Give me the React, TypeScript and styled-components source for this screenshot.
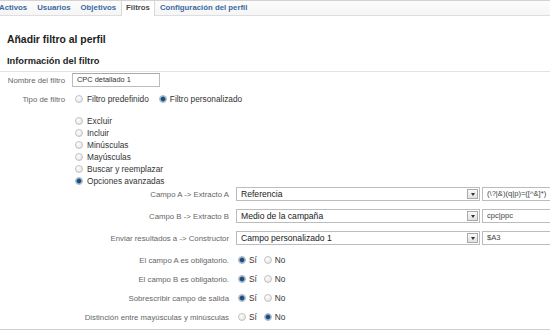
import React from 'react';
import styled, { createGlobalStyle } from 'styled-components';

const GlobalStyle = createGlobalStyle`
  html, body {
    margin: 0;
    padding: 0;
    background: #fff;
    overflow: hidden;
  }
  body {
    font-family: "Liberation Sans", Arial, sans-serif;
  }
`;

const Root = styled.div`
  width: 550px;
  height: 330px;
  overflow: hidden;
  display: flex;
  flex-direction: column;
`;

const TabBar = styled.div`
  display: flex;
  height: 14px;
  margin-left: -6px;
  border-top: 1px solid #d2d2d2;
  border-bottom: 1px solid #dedede;
  background: linear-gradient(#fcfcfc, #f5f5f5);
`;

const Tab = styled.div<{ $active?: boolean }>`
  padding: 0 ${(p) => (p.$active ? 4 : 5)}px;
  height: ${(p) => (p.$active ? 15 : 14)}px;
  line-height: 14px;
  font-size: 7.8px;
  font-weight: bold;
  white-space: nowrap;
  color: ${(p) => (p.$active ? '#4a4a4a' : '#3b6aa0')};
  background: ${(p) => (p.$active ? '#fff' : 'transparent')};
  border-left: ${(p) => (p.$active ? '1px solid #d8d8d8' : 'none')};
  border-right: ${(p) => (p.$active ? '1px solid #d8d8d8' : 'none')};
`;

const Title = styled.h1`
  margin: 18px 0 0 7px;
  font-size: 10.4px;
  line-height: 12px;
  font-weight: bold;
  color: #222;
`;

const SectionHeader = styled.h2`
  margin: 9px 0 0;
  padding: 0 0 4px 7px;
  font-size: 9.3px;
  line-height: 12px;
  font-weight: bold;
  color: #222;
  border-bottom: 1px solid #e3e3e3;
`;

const Row = styled.div<{ $top: number; $height: number }>`
  display: flex;
  align-items: center;
  margin-top: ${(p) => p.$top}px;
  height: ${(p) => p.$height}px;
`;

const Label = styled.div<{ $width: number }>`
  flex-shrink: 0;
  width: ${(p) => p.$width}px;
  margin-right: 7px;
  text-align: right;
  font-size: 7.8px;
  color: #666;
  white-space: nowrap;
`;

const NameInput = styled.div`
  box-sizing: border-box;
  width: 88px;
  height: 14px;
  padding-left: 4px;
  border: 1px solid #bcbcbc;
  border-top-color: #a9a9a9;
  font-size: 7.4px;
  line-height: 12px;
  color: #333;
`;

const RadioGroup = styled.div<{ $gap: number }>`
  display: flex;
  align-items: center;
  gap: ${(p) => p.$gap}px;
`;

const Choice = styled.label<{ $indent: number }>`
  display: flex;
  align-items: center;
  gap: ${(p) => (p.$indent ? 4 : 3)}px;
  margin-left: ${(p) => p.$indent}px;
  font-size: 8.3px;
  color: #333;
  white-space: nowrap;
`;

const Radio = styled.input.attrs({ type: 'radio' })`
  appearance: none;
  margin: 0;
  width: 8px;
  height: 8px;
  border-radius: 50%;
  border: 1px solid #c2c2c2;
  background: radial-gradient(circle at 35% 30%, #fff 0, #ececec 60%, #d8d8d8 100%);
  flex-shrink: 0;

  &:checked {
    border-color: #a7b6c6;
    background: radial-gradient(circle, #1e4d7b 0 1.7px, #5f8ab4 2.4px, #dfe7ef 3.3px);
  }
`;

const OptionList = styled.div`
  display: flex;
  flex-direction: column;
  margin-top: 9px;
  padding-left: 72px;
`;

const OptionRow = styled.div`
  height: 12px;
  display: flex;
  align-items: center;
`;

const Select = styled.div`
  box-sizing: border-box;
  flex-shrink: 0;
  width: 244px;
  height: 14px;
  display: flex;
  align-items: center;
  padding-left: 4px;
  border: 1px solid #bcbcbc;
  background: #fff;
  font-size: 8.6px;
  color: #1a1a1a;
  white-space: nowrap;
`;

const SelectText = styled.span`
  flex: 1;
`;

const Arrow = styled.span`
  box-sizing: border-box;
  width: 11px;
  height: 10px;
  margin-right: 1px;
  display: flex;
  align-items: center;
  justify-content: center;
  border: 1px solid #a9a9a9;
  background: linear-gradient(#fafafa, #e2e2e2);

  &::after {
    content: '';
    border-left: 2.5px solid transparent;
    border-right: 2.5px solid transparent;
    border-top: 3px solid #333;
  }
`;

const ExprInput = styled.div`
  box-sizing: border-box;
  flex-shrink: 0;
  width: 110px;
  height: 14px;
  margin-left: 2px;
  padding-left: 4px;
  border: 1px solid #bcbcbc;
  font-size: 7.6px;
  line-height: 12px;
  color: #444;
  white-space: nowrap;
`;

const YesNo = styled.div`
  display: flex;
  align-items: center;
  gap: 7px;
  margin-left: 2px;
`;

const Footer = styled.div`
  margin-top: 6px;
  border-top: 1px solid #cfcfcf;
`;

const tabs = ['Activos', 'Usuarios', 'Objetivos', 'Filtros', 'Configuración del perfil'];

const filterKinds = [
  'Excluir',
  'Incluir',
  'Minúsculas',
  'Mayúsculas',
  'Buscar y reemplazar',
  'Opciones avanzadas',
];

const advanced = [
  { label: 'Campo A -> Extracto A', field: 'Referencia', expr: '(\\?|&)(q|p)=([^&]*)' },
  { label: 'Campo B -> Extracto B', field: 'Medio de la campaña', expr: 'cpc|ppc' },
  { label: 'Enviar resultados a -> Constructor', field: 'Campo personalizado 1', expr: '$A3' },
];

const switches = [
  { label: 'El campo A es obligatorio.', yes: true },
  { label: 'El campo B es obligatorio.', yes: true },
  { label: 'Sobrescribir campo de salida', yes: true },
  { label: 'Distinción entre mayúsculas y minúsculas', yes: false },
];

export default function App() {
  return (
    <Root>
      <GlobalStyle />
      <TabBar>
        {tabs.map((t) => (
          <Tab key={t} $active={t === 'Filtros'}>
            {t}
          </Tab>
        ))}
      </TabBar>

      <Title>Añadir filtro al perfil</Title>
      <SectionHeader>Información del filtro</SectionHeader>

      <Row $top={1} $height={14}>
        <Label $width={65}>Nombre del filtro</Label>
        <NameInput>CPC detallado 1</NameInput>
      </Row>

      <Row $top={5} $height={14}>
        <Label $width={65}>Tipo de filtro</Label>
        <RadioGroup $gap={10}>
          <Choice $indent={3}>
            <Radio name="tipo" />
            Filtro predefinido
          </Choice>
          <Choice $indent={0}>
            <Radio name="tipo" defaultChecked />
            Filtro personalizado
          </Choice>
        </RadioGroup>
      </Row>

      <OptionList>
        {filterKinds.map((k) => (
          <OptionRow key={k}>
            <Choice $indent={3}>
              <Radio name="kind" defaultChecked={k === 'Opciones avanzadas'} />
              {k}
            </Choice>
          </OptionRow>
        ))}
      </OptionList>

      {advanced.map((a, i) => (
        <Row key={a.label} $top={i === 0 ? 0 : 8} $height={14}>
          <Label $width={229}>{a.label}</Label>
          <Select>
            <SelectText>{a.field}</SelectText>
            <Arrow />
          </Select>
          <ExprInput>{a.expr}</ExprInput>
        </Row>
      ))}

      {switches.map((s, i) => (
        <Row key={s.label} $top={i === 0 ? 9 : 7} $height={12}>
          <Label $width={229}>{s.label}</Label>
          <YesNo>
            <Choice $indent={0}>
              <Radio name={`sw${i}`} defaultChecked={s.yes} />
              Sí
            </Choice>
            <Choice $indent={0}>
              <Radio name={`sw${i}`} defaultChecked={!s.yes} />
              No
            </Choice>
          </YesNo>
        </Row>
      ))}

      <Footer />
    </Root>
  );
}
